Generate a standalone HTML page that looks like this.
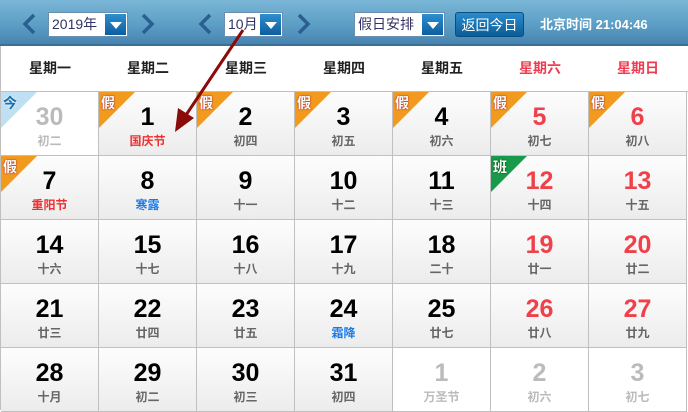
<!DOCTYPE html>
<html><head><meta charset="utf-8"><style>
*{margin:0;padding:0;box-sizing:border-box}
body{width:688px;height:410px;overflow:hidden;background:#fff;font-family:"Liberation Sans","Noto Sans CJK SC",sans-serif;position:relative}
.hdr{position:absolute;left:0;top:0;width:688px;height:46px;background:linear-gradient(#7ab6d6,#5a9cc4 60%,#4784b0);border-bottom:2px solid #3a6f98}
.sel{position:absolute;top:12px;height:25px;background:#fff;border:1px solid #6b8fb0;font-size:14px;color:#336;line-height:23px;padding-left:3px}
.sel i{position:absolute;right:1px;top:1px;width:21px;height:21px;background:linear-gradient(#2d8fd0,#0d5e9e);}
.sel i:after{content:"";position:absolute;left:5px;top:8px;border-left:6px solid transparent;border-right:6px solid transparent;border-top:7px solid #fff}
.btn{position:absolute;left:455px;top:12px;width:69px;height:25px;border-radius:3px;background:linear-gradient(#2a8ccc,#0c5c98);color:#fff;font-size:14px;line-height:24px;text-align:center;border:1px solid #0a4e80}
.clock{position:absolute;left:540px;top:14px;color:#fff;font-size:13px;font-weight:bold}
.wk{position:absolute;top:46px;height:45px;line-height:45px;width:98px;text-align:center;font-size:14px;font-weight:bold;color:#222}
.c{position:absolute;width:98px;height:64px;border-right:1px solid #c0c0c0;border-bottom:1px solid #c0c0c0;background:linear-gradient(#fdfdfd,#ececec);text-align:center;overflow:hidden}
.c.o{background:#fff}
.c b{display:block;font-size:25px;font-weight:bold;color:#000;margin-top:11px;line-height:28px}
.c s{display:block;text-decoration:none;font-size:12px;font-weight:bold;color:#666;line-height:16px;margin-top:2px}
.r b{color:#f0404a}.o b,.o s{color:#bbb}
s.rd{color:#f03030!important}s.bl{color:#1a7ae8!important}
.tag{position:absolute;left:0;top:0;width:0;height:0;border-top:36px solid #f29a1e;border-right:36px solid transparent}
.tag.g{border-top-color:#189a4c}.tag.t{border-top-color:#bfe0f2}
.tg{position:absolute;left:2px;top:1px;font-size:14px;font-weight:bold;color:#fff;text-shadow:0 0 2px #a33, 0 0 1px #a33}
.tg.gg{text-shadow:0 0 2px #040}.tg.tt{color:#1a70b0;text-shadow:0 0 2px #fff}
</style></head><body>
<div class="hdr"></div>
<svg style="position:absolute;left:0;top:0" width="688" height="46" fill="none" stroke="#2a5f90" stroke-width="3.5">
<polyline points="34,15 25,24 34,33"/><polyline points="143,15 152,24 143,33"/>
<polyline points="210,15 201,24 210,33"/><polyline points="299,15 308,24 299,33"/>
</svg>
<div class="sel" style="left:48px;width:80px">2019年<i></i></div>
<div class="sel" style="left:224px;width:59px">10月<i></i></div>
<div class="sel" style="left:354px;width:91px">假日安排<i></i></div>
<div class="btn">返回今日</div>
<div class="clock">北京时间 21:04:46</div>
<div style="position:absolute;left:0;top:91px;width:688px;height:1px;background:#c0c0c0"></div>
<div style="position:absolute;left:0;top:46px;width:1px;height:364px;background:#c0c0c0"></div>
<div id="g"></div>
<script>
var wk=["星期一","星期二","星期三","星期四","星期五","星期六","星期日"],h="";
wk.forEach(function(w,i){h+='<div class="wk" style="left:'+(1+i*98)+'px;'+(i>4?'color:#f03c50':'')+'">'+w+'</div>'});
var d=[
[["30","初二","o","今"],["1","国庆节","rd","假"],["2","初四","","假"],["3","初五","","假"],["4","初六","","假"],["5","初七","r","假"],["6","初八","r","假"]],
[["7","重阳节","rd","假"],["8","寒露","bl"],["9","十一"],["10","十二"],["11","十三"],["12","十四","r","班"],["13","十五","r"]],
[["14","十六"],["15","十七"],["16","十八"],["17","十九"],["18","二十"],["19","廿一","r"],["20","廿二","r"]],
[["21","廿三"],["22","廿四"],["23","廿五"],["24","霜降","bl"],["25","廿七"],["26","廿八","r"],["27","廿九","r"]],
[["28","十月"],["29","初二"],["30","初三"],["31","初四"],["1","万圣节","o"],["2","初六","o"],["3","初七","o"]]];
d.forEach(function(r,ri){r.forEach(function(c,ci){
var k=c[2]||"",cls="c";if(k=="o")cls+=" o";if(k=="r")cls+=" r";
var sc=(k=="rd"||k=="bl")?' class="'+k+'"':'';
var t="";if(c[3]){var tc=c[3]=="班"?" g":c[3]=="今"?" t":"";var tt=c[3]=="班"?" gg":c[3]=="今"?" tt":"";t='<div class="tag'+tc+'"></div><div class="tg'+tt+'">'+c[3]+'</div>';}
h+='<div class="'+cls+'" style="left:'+(1+ci*98)+'px;top:'+(92+ri*64)+'px">'+t+'<b>'+c[0]+'</b><s'+sc+'>'+c[1]+'</s></div>';
})});
document.getElementById("g").innerHTML=h;
</script>
<svg style="position:absolute;left:0;top:0" width="688" height="410"><line x1="243" y1="30" x2="184" y2="118" stroke="#8b0a0a" stroke-width="3"/><polygon points="175,132 178,108 194,118" fill="#8b0a0a"/></svg>
</body></html>
